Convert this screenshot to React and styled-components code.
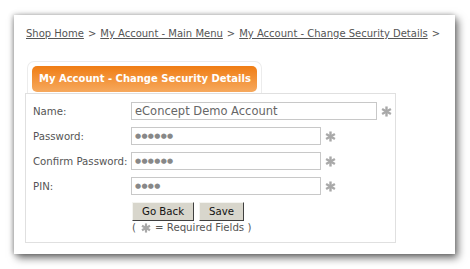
import React from 'react';
import styled, {createGlobalStyle} from 'styled-components';

const Global = createGlobalStyle`
    body {
        margin: 0;
        background: #ffffff;
        font-family: "DejaVu Sans", Verdana, sans-serif;
    }
`;

const Page = styled.div`
    width: 470px;
    height: 269px;
    padding: 15px 0 0 14px;
    box-sizing: border-box;
`;

const Card = styled.div`
    width: 441px;
    height: 239px;
    background: #ffffff;
    box-sizing: border-box;
    padding: 12px 0 0 11px;
    box-shadow: 3px 4px 8px rgba(0, 0, 0, 0.55), -1px 0 5px rgba(0, 0, 0, 0.3);
`;

const Crumbs = styled.div`
    font-size: 10px;
    color: #555;
    margin-left: 1px;
    line-height: 13px;
    white-space: nowrap;
`;

const Crumb = styled.a`
    color: #555;
    text-decoration: underline;
`;

const Sep = styled.span`
    margin: 0 4px;
`;

const TabWrap = styled.div`
    margin: 21px 0 0 2px;
    width: 235px;
    height: 32px;
    box-sizing: border-box;
    border: 1px solid #ececec;
    border-bottom: none;
    border-radius: 7px 7px 0 0;
    padding: 4px 4px 0 4px;
    background: #ffffff;
`;

const Tab = styled.div`
    height: 26px;
    border-radius: 5px;
    background: linear-gradient(#f07d14, #f6a95e);
    color: #ffffff;
    font-weight: bold;
    font-size: 10px;
    line-height: 26px;
    padding-left: 7px;
    white-space: nowrap;
`;

const Box = styled.div`
    width: 371px;
    height: 150px;
    box-sizing: border-box;
    border: 1px solid #e0e0e0;
    padding: 8px 0 0 7px;
`;

const Row = styled.div`
    display: flex;
    align-items: center;
    height: 18px;
    margin-bottom: 7px;
`;

const Label = styled.div`
    width: 98px;
    font-size: 10.2px;
    color: #555;
    white-space: nowrap;
`;

const Input = styled.div`
    width: ${p => p.$w}px;
    height: 18px;
    box-sizing: border-box;
    border: 1px solid #c8c8c8;
    padding-left: 3px;
    color: #666;
    font-size: ${p => (p.$dots ? '7px' : '11.5px')};
    letter-spacing: ${p => (p.$dots ? '0.3px' : '0')};
    line-height: 16px;
    white-space: nowrap;
    overflow: hidden;
    ${p => p.$dots && 'color: #888;'}
`;

const StarIcon = styled.svg`
    flex: none;
    margin-left: ${p => p.$ml || 0}px;
    margin-right: ${p => p.$mr || 0}px;
`;

const Star = ({size = 11, ml = 4, mr = 0}) => (
    <StarIcon width={size} height={size} viewBox="0 0 12 12" $ml={ml} $mr={mr}>
        <g stroke="#a9a9a9" strokeWidth="2.6" strokeLinecap="butt">
            <line x1="6" y1="0.5" x2="6" y2="11.5" />
            <line x1="1.2" y1="3.25" x2="10.8" y2="8.75" />
            <line x1="1.2" y1="8.75" x2="10.8" y2="3.25" />
        </g>
    </StarIcon>
);

const Buttons = styled.div`
    display: flex;
    gap: 5px;
    margin-left: 99px;
`;

const Button = styled.button`
    height: 19px;
    padding: 0 9px;
    font-family: "DejaVu Sans", Verdana, sans-serif;
    font-size: 10.2px;
    color: #111;
    background: #d8d6cc;
    border: 1px solid;
    border-color: #f4f4f0 #404040 #404040 #f4f4f0;
    line-height: 15px;
`;

const Note = styled.div`
    margin: 1px 0 0 99px;
    font-size: 10.2px;
    color: #555;
    display: flex;
    align-items: center;
    line-height: 12px;
`;

const fields = [
    {label: 'Name:', value: 'eConcept Demo Account', w: 246},
    {label: 'Password:', value: '●●●●●●', w: 190, dots: true},
    {label: 'Confirm Password:', value: '●●●●●●', w: 190, dots: true},
    {label: 'PIN:', value: '●●●●', w: 190, dots: true},
];

const App = () => {
    return <Page>
        <Global />
        <Card>
            <Crumbs>
                <Crumb>Shop Home</Crumb><Sep>&gt;</Sep>
                <Crumb>My Account - Main Menu</Crumb><Sep>&gt;</Sep>
                <Crumb>My Account - Change Security Details</Crumb><Sep>&gt;</Sep>
            </Crumbs>

            <TabWrap>
                <Tab>My Account - Change Security Details</Tab>
            </TabWrap>

            <Box>
                {fields.map(f => (
                    <Row key={f.label}>
                        <Label>{f.label}</Label>
                        <Input $w={f.w} $dots={f.dots}>{f.value}</Input>
                        <Star ml={f.dots ? 4 : 4} />
                    </Row>
                ))}
                <Buttons>
                    <Button>Go Back</Button>
                    <Button>Save</Button>
                </Buttons>
                <Note>(<Star size={10} ml={5} mr={4} />= Required Fields )</Note>
            </Box>
        </Card>
    </Page>
}

export default App;
